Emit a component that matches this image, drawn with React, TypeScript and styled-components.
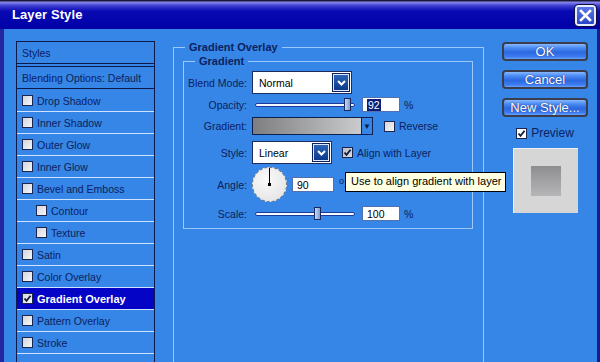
import styled, { createGlobalStyle } from 'styled-components';

const GlobalStyle = createGlobalStyle`
  html, body {
    margin: 0;
    padding: 0;
    overflow: hidden;
  }
  body {
    font-family: "Liberation Sans", Arial, sans-serif;
    font-size: 10.5px;
    color: #0c2160;
  }
`

const Window = styled.div`
  display: flex;
  flex-direction: column;
  width: 600px;
  height: 362px;
  overflow: hidden;
  background: #3586e6;
`

const TitleBar = styled.header`
  display: flex;
  align-items: center;
  justify-content: space-between;
  flex-shrink: 0;
  height: 29px;
  padding: 0 4px 0 12px;
  box-sizing: border-box;
  background: linear-gradient(to bottom, #1a1a38 0px, #1a1a38 1px, #8c8cf0 2px, #3a3ad0 6px, #0a0ab4 11px, #0000a6 100%);
  color: #fff;
  font-weight: bold;
  font-size: 13px;
  letter-spacing: 0.1px;
`

const CloseButton = styled.button`
  display: flex;
  align-items: center;
  justify-content: center;
  width: 21px;
  height: 21px;
  padding: 0;
  margin-top: 1px;
  border: 2px solid #e8ecff;
  border-radius: 3px;
  outline: 1px solid #101040;
  background: linear-gradient(to bottom, #5a78e8, #2a46c8);
`

const Body = styled.div`
  display: flex;
  flex: 1;
  min-height: 0;
  padding: 12px 9px 0 12px;
  border-left: 4px solid #2626a4;
  border-right: 3px solid #1a1a90;
`

const StylesPanel = styled.ul`
  flex-shrink: 0;
  width: 139px;
  margin: 0 18px 0 0;
  padding: 0;
  list-style: none;
  border: 1px solid #0c1a4a;
  border-bottom: none;
  box-sizing: border-box;
`

const PanelRow = styled.li<{ $kind?: 'head' | 'item'; $indent?: boolean; $active?: boolean }>`
  display: flex;
  align-items: center;
  gap: 4px;
  height: 21px;
  padding-left: ${p => (p.$indent ? 19 : 5)}px;
  border-bottom: 1px solid ${p => (p.$kind === 'head' ? '#0c1a4a' : '#cfe2ff')};
  margin-bottom: ${p => (p.$kind === 'head' ? 1 : 0)}px;
  border-top: ${p => (p.$kind === 'head' ? '1px solid #0c1a4a' : 'none')};
  background: ${p => (p.$active ? '#0404c6' : 'transparent')};
  color: ${p => (p.$active ? '#fff' : '#0c2160')};
  font-weight: ${p => (p.$active ? 'bold' : 'normal')};
  font-size: ${p => (p.$active ? '11px' : '10.5px')};
  white-space: nowrap;

  &:first-child {
    border-top: none;
    margin-bottom: 2px;
  }
`

const Box = styled.span<{ $tone?: 'white' | 'grey' }>`
  display: flex;
  align-items: center;
  justify-content: center;
  flex-shrink: 0;
  width: 11px;
  height: 11px;
  box-sizing: border-box;
  border: 1px solid #1b2650;
  background: ${p =>
    p.$tone === 'grey'
      ? 'linear-gradient(to bottom right, #b8bcc8, #dcdee4)'
      : p.$tone === 'white'
      ? '#fff'
      : 'linear-gradient(to bottom right, #d4d6dc, #f6f6f8)'};
`

const Check = () => (
  <svg width="9" height="9" viewBox="0 0 9 9">
    <path d="M1.5 4.5 L3.5 6.8 L7.6 1.8" fill="none" stroke="#111a3a" strokeWidth="1.8" />
  </svg>
)

const OuterSet = styled.fieldset`
  flex-shrink: 0;
  width: 311px;
  margin: 0 18px 0 0;
  padding: 1px 10px 0 9px;
  border: 1px solid #9cc8ff;
  border-bottom: none;
  box-sizing: border-box;
  min-width: 0;
`

const InnerSet = styled.fieldset`
  margin: 0;
  padding: 3px 0 7px 0;
  border: 1px solid #9cc8ff;
  min-width: 0;
`

const Legend = styled.legend<{ $offset: number }>`
  margin-left: ${p => p.$offset}px;
  padding: 0 4px;
  font-weight: bold;
  font-size: 11px;
  line-height: 13px;
  color: #0c2160;
`

const Row = styled.div<{ $h: number; $mt: number }>`
  display: flex;
  align-items: center;
  height: ${p => p.$h}px;
  margin-top: ${p => p.$mt}px;
  white-space: nowrap;

  & > * {
    flex-shrink: 0;
  }
`

const Label = styled.span`
  width: 63px;
  margin-right: 5px;
  text-align: right;
`

const Select = styled.div<{ $w: number }>`
  display: flex;
  align-items: center;
  justify-content: space-between;
  width: ${p => p.$w}px;
  height: 23px;
  padding: 0 1px 0 6px;
  box-sizing: border-box;
  border: 1px solid #1c2c60;
  background: #fff;
  color: #000;
`

const DropButton = styled.span`
  display: flex;
  align-items: center;
  justify-content: center;
  width: 18px;
  height: 19px;
  box-sizing: border-box;
  border: 2px solid #dfe8ff;
  outline: 1px solid #0c1f5a;
  outline-offset: -1px;
  background: linear-gradient(to bottom, #2a64b8, #0c3a8a);
`

const Chevron = () => (
  <svg width="9" height="6" viewBox="0 0 9 6">
    <path d="M1 1 L4.5 4.5 L8 1" fill="none" stroke="#fff" strokeWidth="2" />
  </svg>
)

const Slider = styled.div<{ $value: number }>`
  position: relative;
  width: 100px;
  height: 15px;
  margin-left: 3px;
  margin-right: 7px;

  &::before {
    content: '';
    position: absolute;
    left: 0;
    right: 0;
    top: 6px;
    height: 2px;
    background: #f4f8ff;
    border: 1px solid #1c3a9a;
    border-radius: 2px;
  }

  &::after {
    content: '';
    position: absolute;
    top: 1px;
    left: ${p => p.$value}px;
    width: 7px;
    height: 13px;
    box-sizing: border-box;
    border: 1px solid #1a2a60;
    background: linear-gradient(to right, #c8d8f0, #7c9cd8);
  }
`

const NumberBox = styled.span<{ $w: number }>`
  display: flex;
  align-items: center;
  width: ${p => p.$w}px;
  height: 15px;
  padding-left: 4px;
  box-sizing: border-box;
  border: 1px solid #5070b0;
  background: #fff;
  color: #000;
`

const Selected = styled.span`
  background: #0a1e78;
  color: #fff;
  padding: 0 1px;
`

const Unit = styled.span`
  margin-left: 4px;
`

const GradientSwatch = styled.span`
  width: 110px;
  height: 18px;
  box-sizing: border-box;
  border: 1px solid #10204e;
  background: linear-gradient(to right, #7e7e80, #cacbcd);
`

const SwatchArrow = styled.span`
  display: flex;
  align-items: center;
  justify-content: center;
  width: 11px;
  height: 18px;
  box-sizing: border-box;
  border: 1px solid #10204e;
  border-left: none;
  margin-right: 11px;
  font-size: 8px;
  color: #0c1a40;
`

const CheckLabel = styled.span`
  margin-left: 4px;
`

const Spacer = styled.span<{ $w: number }>`
  width: ${p => p.$w}px;
`

const Dial = styled.span`
  position: relative;
  width: 35px;
  height: 35px;
  margin-right: 5px;
  box-sizing: border-box;
  border-radius: 50%;
  border: 1px dashed #7a7a84;
  background: radial-gradient(circle at 40% 35%, #fafafa, #e0e0e2);
`

const DialHand = styled.span`
  position: absolute;
  left: 16px;
  top: 0;
  width: 1px;
  height: 16px;
  background: #000;

  &::after {
    content: '';
    position: absolute;
    left: -1px;
    bottom: -2px;
    width: 3px;
    height: 3px;
    background: #000;
  }
`

const Degree = styled.span`
  align-self: flex-start;
  margin: 9px 1px 0 5px;
  font-size: 9px;
`

const Tooltip = styled.span`
  position: relative;
  z-index: 2;
  align-self: flex-start;
  margin-top: 5px;
  padding: 1px 4px 2px 5px;
  border: 1px solid #000;
  background: #ffffe1;
  color: #000;
  font-size: 11px;
  line-height: 15px;
`

const Side = styled.div`
  display: flex;
  flex-direction: column;
  align-items: center;
  width: 86px;
  flex-shrink: 0;
  padding-top: 1px;
`

const DialogButton = styled.button`
  width: 86px;
  height: 19px;
  margin-bottom: 9px;
  padding: 0;
  border: 2px solid #3a3e4c;
  border-radius: 4px;
  background: linear-gradient(to bottom, #8ab8ff 0%, #4c8cf4 25%, #2c68e0 55%, #3c7cf0 85%, #6aa0ff 100%);
  color: #fff;
  font-family: "Liberation Sans", Arial, sans-serif;
  font-size: 13px;
  line-height: 15px;
  text-shadow: 0 0 1px #102060;
`

const PreviewToggle = styled.div`
  display: flex;
  align-items: center;
  gap: 4px;
  font-size: 12px;
  color: #0c2160;
`

const PreviewBox = styled.div`
  display: flex;
  align-items: center;
  justify-content: center;
  width: 65px;
  height: 65px;
  margin-top: 8px;
  border-top: 1px solid #f0f0f0;
  border-left: 1px solid #f0f0f0;
  box-sizing: border-box;
  background: #d6d6d6;
`

const PreviewSquare = styled.span`
  width: 30px;
  height: 30px;
  background: linear-gradient(to bottom, #8e8e90, #b6b6b8);
`

const effects: { name: string; indent?: boolean; active?: boolean }[] = [
  { name: 'Drop Shadow' },
  { name: 'Inner Shadow' },
  { name: 'Outer Glow' },
  { name: 'Inner Glow' },
  { name: 'Bevel and Emboss' },
  { name: 'Contour', indent: true },
  { name: 'Texture', indent: true },
  { name: 'Satin' },
  { name: 'Color Overlay' },
  { name: 'Gradient Overlay', active: true },
  { name: 'Pattern Overlay' },
  { name: 'Stroke' },
  { name: '' },
]

const App = () => {
  return (
    <>
      <GlobalStyle />
      <Window>
        <TitleBar>
          <span>Layer Style</span>
          <CloseButton aria-label="Close">
            <svg width="13" height="13" viewBox="0 0 13 13">
              <path d="M2 2 L11 11 M11 2 L2 11" stroke="#fff" strokeWidth="2.6" strokeLinecap="square" />
            </svg>
          </CloseButton>
        </TitleBar>

        <Body>
          <StylesPanel>
            <PanelRow $kind="head">Styles</PanelRow>
            <PanelRow $kind="head">Blending Options: Default</PanelRow>
            {effects.map((e, i) => (
              <PanelRow key={i} $indent={e.indent} $active={e.active}>
                {e.name && (
                  <>
                    <Box>{e.active && <Check />}</Box>
                    {e.name}
                  </>
                )}
              </PanelRow>
            ))}
          </StylesPanel>

          <OuterSet>
            <Legend $offset={2}>Gradient Overlay</Legend>
            <InnerSet>
              <Legend $offset={11}>Gradient</Legend>

              <Row $h={23} $mt={0}>
                <Label>Blend Mode:</Label>
                <Select $w={100}>
                  Normal
                  <DropButton><Chevron /></DropButton>
                </Select>
              </Row>

              <Row $h={15} $mt={3}>
                <Label>Opacity:</Label>
                <Slider $value={89} />
                <NumberBox $w={38}><Selected>92</Selected></NumberBox>
                <Unit>%</Unit>
              </Row>

              <Row $h={18} $mt={5}>
                <Label>Gradient:</Label>
                <GradientSwatch />
                <SwatchArrow>▼</SwatchArrow>
                <Box />
                <CheckLabel>Reverse</CheckLabel>
              </Row>

              <Row $h={23} $mt={6}>
                <Label>Style:</Label>
                <Select $w={80}>
                  Linear
                  <DropButton><Chevron /></DropButton>
                </Select>
                <Spacer $w={10} />
                <Box $tone="grey"><Check /></Box>
                <CheckLabel>Align with Layer</CheckLabel>
              </Row>

              <Row $h={35} $mt={3}>
                <Label>Angle:</Label>
                <Dial><DialHand /></Dial>
                <NumberBox $w={42}>90</NumberBox>
                <Degree>o</Degree>
                <Tooltip>Use to align gradient with layer</Tooltip>
              </Row>

              <Row $h={15} $mt={4}>
                <Label>Scale:</Label>
                <Slider $value={59} />
                <NumberBox $w={38}>100</NumberBox>
                <Unit>%</Unit>
              </Row>
            </InnerSet>
          </OuterSet>

          <Side>
            <DialogButton>OK</DialogButton>
            <DialogButton>Cancel</DialogButton>
            <DialogButton>New Style...</DialogButton>
            <PreviewToggle>
              <Box $tone="white"><Check /></Box>
              Preview
            </PreviewToggle>
            <PreviewBox>
              <PreviewSquare />
            </PreviewBox>
          </Side>
        </Body>
      </Window>
    </>
  )
}

export default App
